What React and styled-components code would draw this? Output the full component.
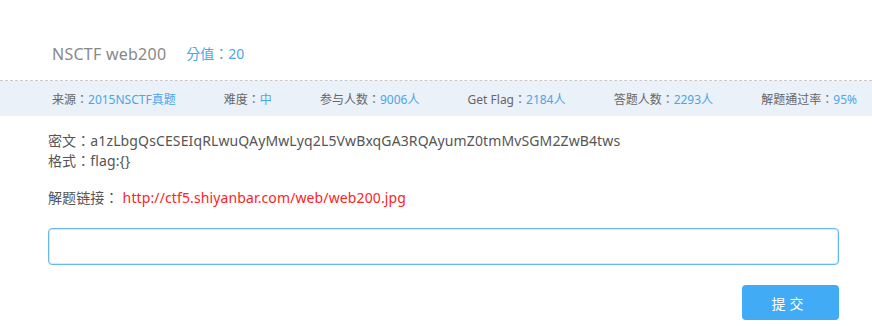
import React from "react";
import styled, { createGlobalStyle } from "styled-components";

const Global = createGlobalStyle`
  html, body { margin: 0; padding: 0; background: #fff; }
  body { font-family: "Noto Sans", "Noto Sans CJK TC", sans-serif; }
  * { box-sizing: border-box; }
`;

const Page = styled.div`
  width: 872px;
  height: 326px;
  overflow: hidden;
  background: #fff;
`;

const Header = styled.div`
  display: flex;
  align-items: center;
  gap: 20px;
  padding: 42px 0 14px 52px;
  border-bottom: 1px dashed #c9c9c9;
  line-height: 24px;
`;

const Title = styled.span`
  font-size: 16px;
  color: #888;
  letter-spacing: 0.25px;
`;

const Score = styled.span`
  font-size: 14px;
  color: #4aa6ea;
`;

const StatsBar = styled.div`
  display: flex;
  align-items: center;
  justify-content: space-between;
  height: 35px;
  padding: 0 15px 0 52px;
  background: #eaf1f8;
  font-size: 12px;
`;

const Stat = styled.span`
  color: #666;
  white-space: nowrap;
`;

const Value = styled.span`
  color: #4aa6ea;
`;

const Body = styled.div`
  padding: 15px 33px 0 48px;
  font-size: 14px;
  color: #555;
  line-height: 20px;
  letter-spacing: 0.12px;
`;

const Line = styled.div`
  margin-top: ${(p) => p.$gap || 0}px;
`;

const Link = styled.a`
  color: #ff2222;
  text-decoration: none;
  margin-left: 4px;
`;

const Input = styled.input`
  display: block;
  width: 100%;
  height: 37px;
  margin-top: 20px;
  border: 1px solid #66b7f2;
  border-radius: 4px;
  box-shadow: inset 0 0 0 1px #d4ebfc;
  outline: none;
  padding: 0 10px;
  font-size: 14px;
`;

const Actions = styled.div`
  display: flex;
  justify-content: flex-end;
  margin-top: 20px;
`;

const Submit = styled.button`
  width: 97px;
  height: 35px;
  border: none;
  border-radius: 4px;
  background: #42abf6;
  color: #fff;
  font-family: inherit;
  font-size: 14px;
  letter-spacing: 4px;
  padding-left: 4px;
  cursor: pointer;
`;

const stats = [
  ["来源：", "2015NSCTF真题"],
  ["难度：", "中"],
  ["参与人数：", "9006人"],
  ["Get Flag：", "2184人"],
  ["答题人数：", "2293人"],
  ["解题通过率：", "95%"],
];

export default function App() {
  return (
    <Page>
      <Global />
      <Header>
        <Title>NSCTF web200</Title>
        <Score>分值：20</Score>
      </Header>
      <StatsBar>
        {stats.map(([k, v]) => (
          <Stat key={k}>
            {k}
            <Value>{v}</Value>
          </Stat>
        ))}
      </StatsBar>
      <Body>
        <Line>密文：a1zLbgQsCESEIqRLwuQAyMwLyq2L5VwBxqGA3RQAyumZ0tmMvSGM2ZwB4tws</Line>
        <Line>格式：flag:{"{}"}</Line>
        <Line $gap={17}>
          解题链接：
          <Link href="#">http://ctf5.shiyanbar.com/web/web200.jpg</Link>
        </Line>
        <Input type="text" />
        <Actions>
          <Submit>提交</Submit>
        </Actions>
      </Body>
    </Page>
  );
}
